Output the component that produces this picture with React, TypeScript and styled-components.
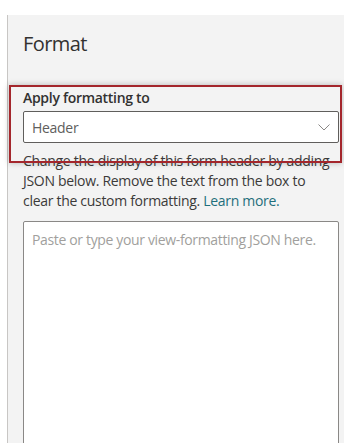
import React from 'react';
import styled, { createGlobalStyle } from 'styled-components';

const GlobalStyle = createGlobalStyle`
    html, body {
        margin: 0;
        padding: 0;
        background: #ffffff;
        font-family: 'Open Sans', 'Noto Sans', sans-serif;
        color: #323130;
    }
    * {
        box-sizing: border-box;
    }
`;

const Page = styled.div`
    padding-top: 15px;
    height: 100vh;
    overflow: hidden;
`;

const Panel = styled.section`
    position: relative;
    margin-left: 7px;
    min-height: calc(100vh - 15px);
    background: #f3f3f3;
    border-left: 1px solid #c8c6c4;
    padding: 15px 5px 0 15px;
`;

const Title = styled.h2`
    margin: 0;
    font-size: 20px;
    line-height: 28px;
    font-weight: 400;
    letter-spacing: -0.6px;
    color: #323130;
`;

const Field = styled.div`
    margin-top: 30px;
    display: flex;
    flex-direction: column;
    gap: 3px;
`;

const Label = styled.label`
    font-size: 14px;
    line-height: 20px;
    font-weight: 600;
    letter-spacing: -0.3px;
    color: #323130;
`;

const Dropdown = styled.div`
    height: 32px;
    background: #ffffff;
    border: 1px solid #605e5c;
    border-radius: 2px;
    display: flex;
    align-items: center;
    justify-content: space-between;
    padding: 0 8px 0 8px;
    font-size: 14px;
    letter-spacing: -0.3px;
    color: #605e5c;
`;

const Description = styled.p`
    margin: 8px 0 0;
    font-size: 14px;
    line-height: 20px;
    letter-spacing: -0.3px;
    color: #3b3a39;
`;

const Link = styled.a`
    color: #1f6f7c;
    text-decoration: none;
`;

const Editor = styled.textarea`
    display: block;
    width: 100%;
    height: 260px;
    margin-top: 10px;
    padding: 8px 6px 8px 8px;
    resize: none;
    background: #ffffff;
    border: 1px solid #8a8886;
    border-radius: 2px;
    font-family: 'Open Sans', 'Noto Sans', sans-serif;
    font-size: 14px;
    line-height: 20px;
    letter-spacing: -0.35px;
    color: #323130;
    outline: none;

    &::placeholder {
        color: #a19f9d;
    }
`;

const Highlight = styled.div`
    position: absolute;
    left: 1px;
    top: 70px;
    width: 333px;
    height: 78px;
    border: 2px solid #a4262c;
    box-shadow: 0 0 6px rgba(0, 0, 0, 0.25);
    pointer-events: none;
`;

const Chevron = () => (
    <svg width="12" height="7" viewBox="0 0 12 7" fill="none">
        <path d="M0.5 0.5L6 6L11.5 0.5" stroke="#8a8886" strokeWidth="1" />
    </svg>
);

const App = (): React.ReactElement => {
    return (
        <Page>
            <GlobalStyle />
            <Panel>
                <Title>Format</Title>
                <Field>
                    <Label>Apply formatting to</Label>
                    <Dropdown>
                        <span>Header</span>
                        <Chevron />
                    </Dropdown>
                </Field>
                <Description>
                    Change the display of this form header by adding
                    <br />
                    JSON below. Remove the text from the box to
                    <br />
                    clear the custom formatting. <Link href="#">Learn more.</Link>
                </Description>
                <Editor placeholder="Paste or type your view-formatting JSON here." />
                <Highlight />
            </Panel>
        </Page>
    );
};

export default App;
